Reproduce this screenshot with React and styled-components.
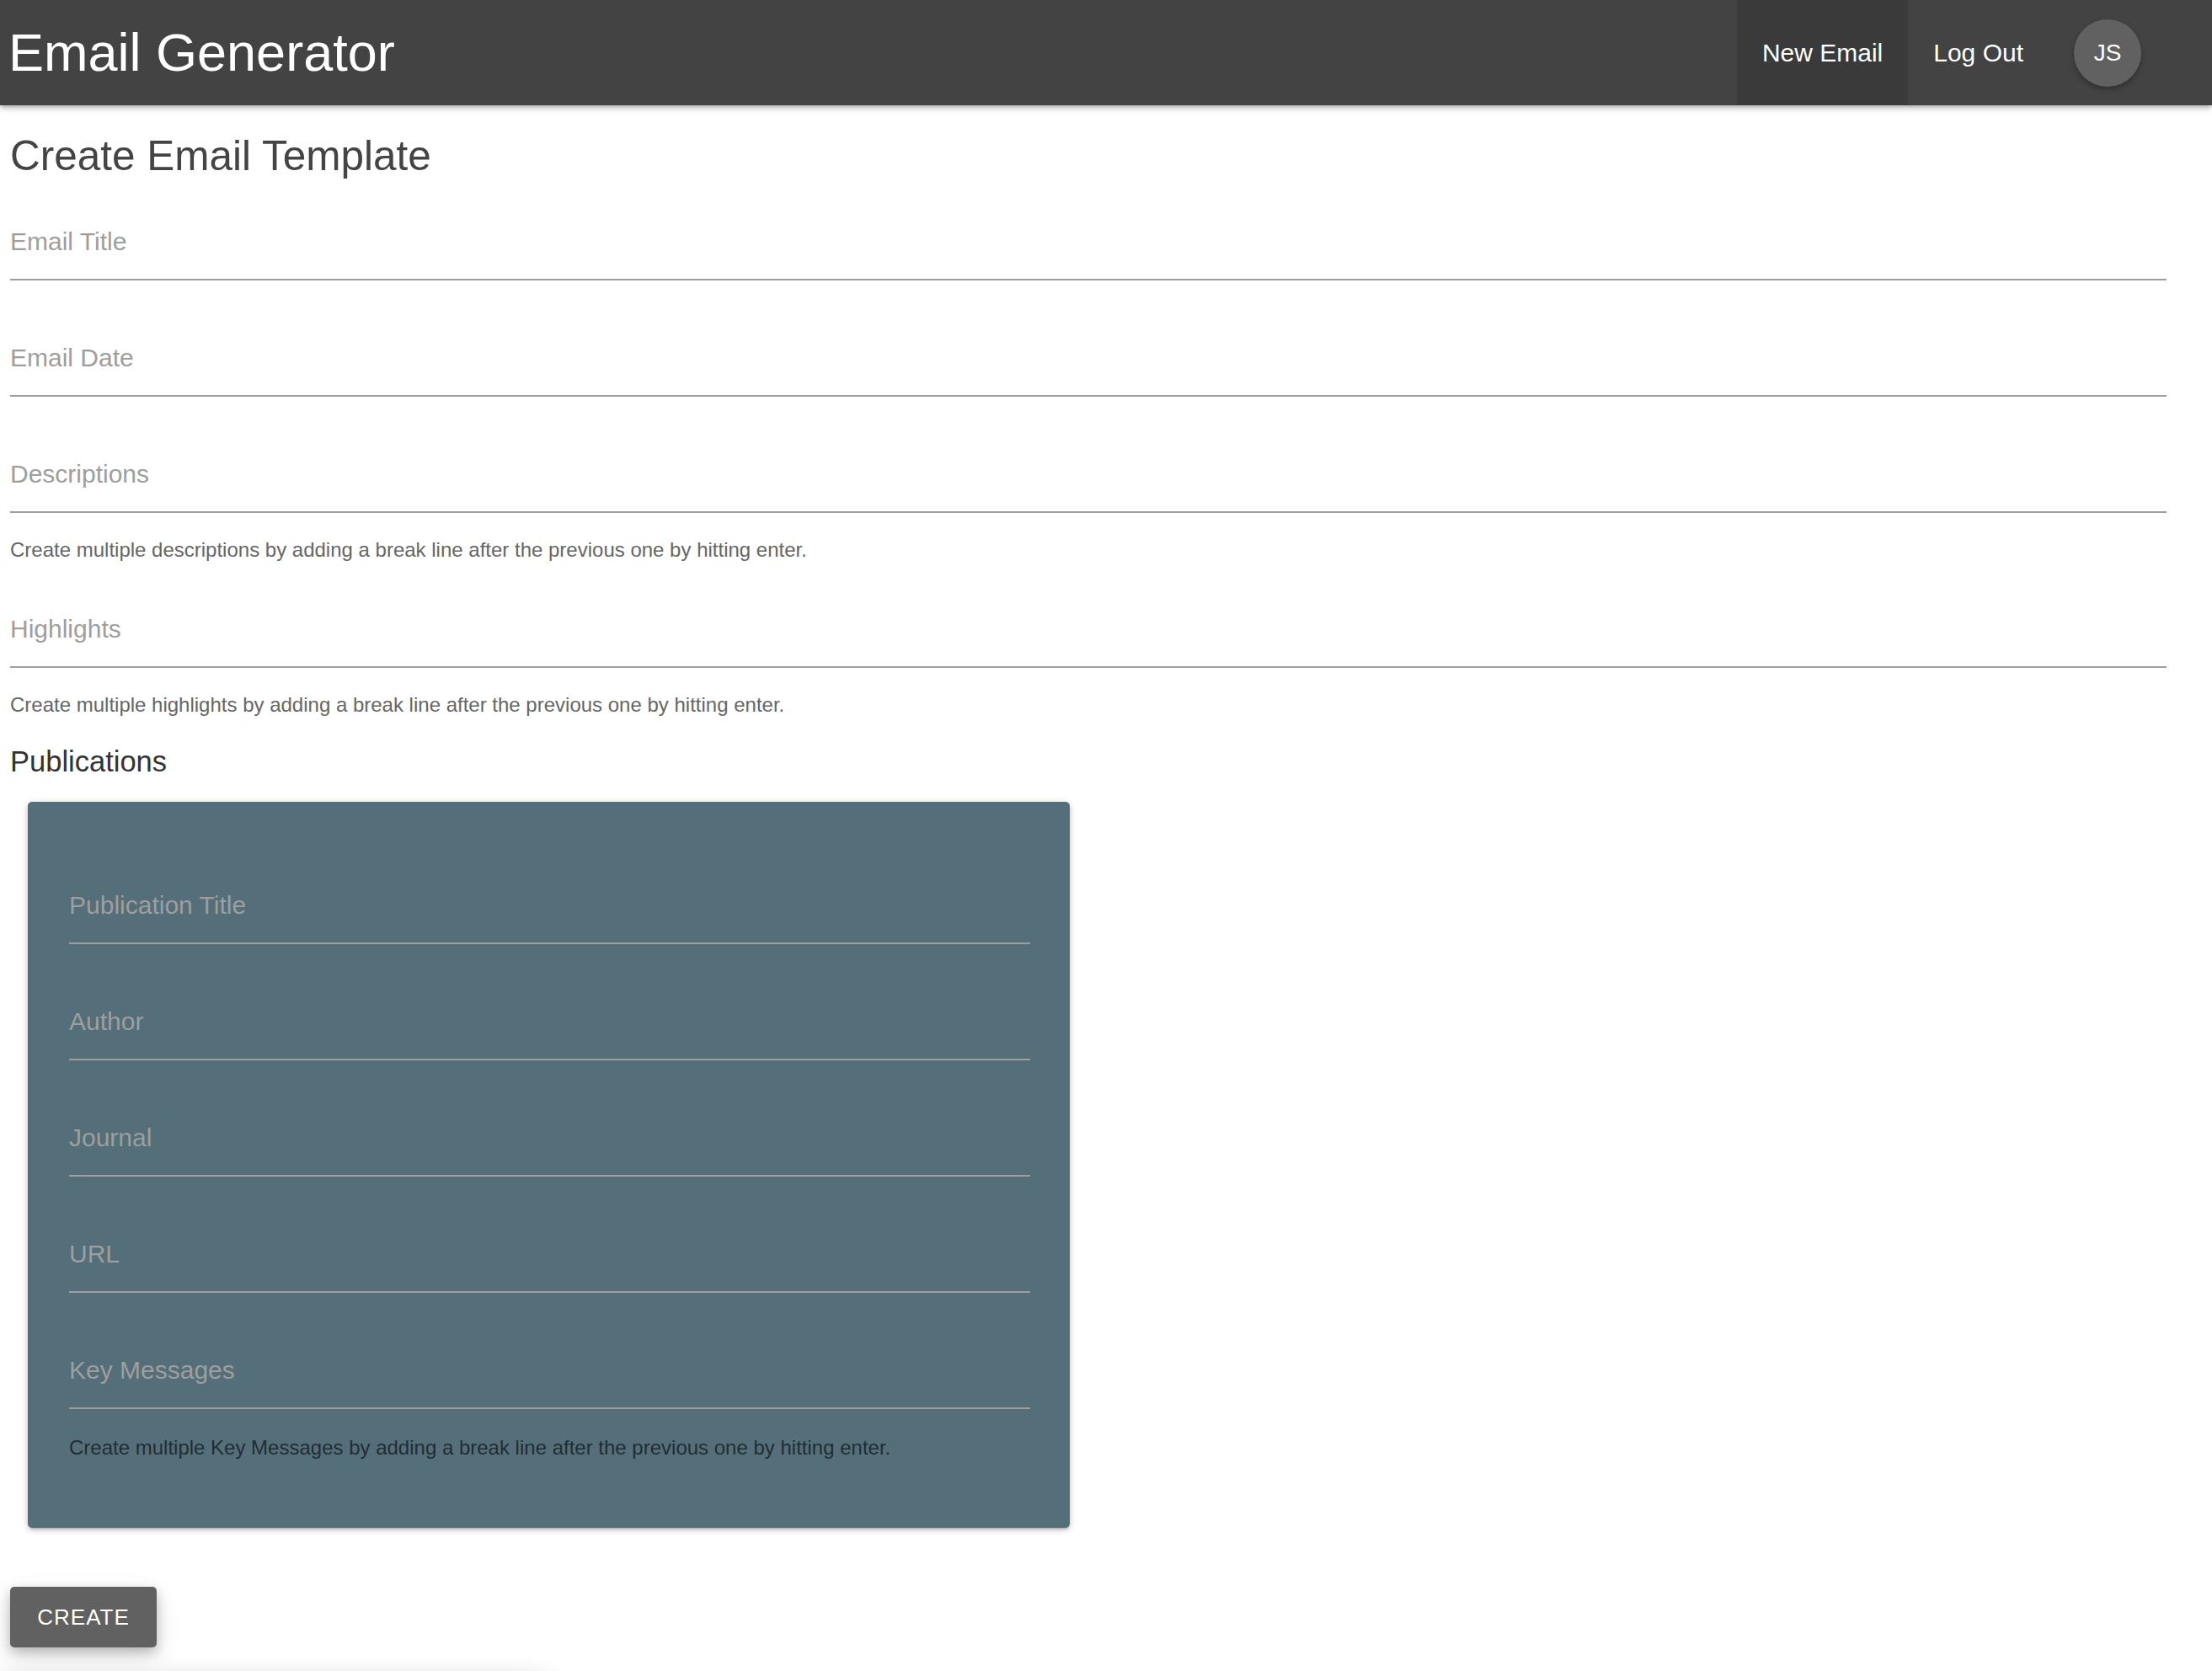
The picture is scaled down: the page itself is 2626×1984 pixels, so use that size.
import React from "react";
import styled, { createGlobalStyle } from "styled-components";

const GlobalStyle = createGlobalStyle`
  html, body {
    margin: 0;
    padding: 0;
    background: #ffffff;
    overflow: hidden;
  }
  body {
    font-family: "Liberation Sans", Arial, Helvetica, sans-serif;
    -webkit-font-smoothing: antialiased;
  }
  * { box-sizing: border-box; }
`;

const Page = styled.div`
  display: flex;
  flex-direction: column;
  height: 1984px;
  overflow: hidden;
`;

const AppBar = styled.header`
  display: flex;
  flex-shrink: 0;
  align-items: center;
  height: 125px;
  padding: 0 84px 0 10px;
  background: #434343;
  color: #ffffff;
  box-shadow: 0 2px 4px -1px rgba(0, 0, 0, 0.2), 0 4px 6px 0 rgba(0, 0, 0, 0.14),
    0 1px 12px 0 rgba(0, 0, 0, 0.12);
  position: relative;
  z-index: 2;
`;

const Brand = styled.h1`
  flex: 1;
  margin: 0;
  font-size: 63px;
  line-height: 1;
  font-weight: 400;
`;

const NavItem = styled.a`
  display: flex;
  align-items: center;
  align-self: stretch;
  padding: 0 30px;
  font-size: 30px;
  line-height: 1;
  color: #ffffff;
  text-decoration: none;
  background: ${(p) => (p.$active ? "#3a3a3a" : "transparent")};
`;

const Avatar = styled.div`
  display: flex;
  align-items: center;
  justify-content: center;
  width: 80px;
  height: 80px;
  margin-left: 30px;
  border-radius: 50%;
  background: #616161;
  color: #ffffff;
  font-size: 28px;
  box-shadow: 0 3px 6px rgba(0, 0, 0, 0.3);
`;

const Main = styled.main`
  display: flex;
  flex-direction: column;
  align-items: flex-start;
  padding: 28px 54px 0 12px;
`;

const Heading = styled.h2`
  margin: 0;
  font-size: 49.5px;
  line-height: 64px;
  font-weight: 400;
  color: #444444;
`;

const Field = styled.div`
  align-self: stretch;
  margin-top: ${(p) => p.$top ?? 74}px;
  padding-bottom: 26px;
  border-bottom: 2px solid #9e9e9e;
`;

const Label = styled.label`
  display: block;
  font-size: 30px;
  line-height: 36px;
  color: #9e9e9e;
`;

const Helper = styled.p`
  margin: ${(p) => p.$top ?? 28}px 0 0;
  font-size: 24px;
  line-height: 32px;
  color: ${(p) => (p.$dark ? "rgba(0, 0, 0, 0.62)" : "#666666")};
`;

const SectionTitle = styled.h3`
  margin: 31px 0 0;
  font-size: 34.5px;
  line-height: 40px;
  font-weight: 400;
  color: #333333;
`;

const Card = styled.section`
  display: flex;
  flex-direction: column;
  width: 1237px;
  margin: 28px 0 0 21px;
  padding: 31px 47px 79px 49px;
  background: #546e7a;
  border-radius: 5px;
  box-shadow: 0 3px 3px -2px rgba(0, 0, 0, 0.2), 0 3px 6px 0 rgba(0, 0, 0, 0.14),
    0 1px 10px 0 rgba(0, 0, 0, 0.12);
`;

const Button = styled.button`
  display: flex;
  flex-shrink: 0;
  align-items: center;
  justify-content: center;
  width: 174px;
  height: 72px;
  margin-top: 70px;
  border: none;
  border-radius: 5px;
  background: #616161;
  color: #ffffff;
  font-family: inherit;
  font-size: 26px;
  letter-spacing: 1px;
  text-transform: uppercase;
  box-shadow: 0 6px 14px rgba(0, 0, 0, 0.22), 0 10px 30px rgba(0, 0, 0, 0.12);
  cursor: pointer;
`;

const NextPanel = styled.div`
  flex-shrink: 0;
  width: 650px;
  height: 200px;
  margin-top: 36px;
  margin-left: -12px;
  background: #ffffff;
  box-shadow: 0 0 26px rgba(0, 0, 0, 0.16);
`;

const mainFields = [
  { label: "Email Title", top: 52 },
  { label: "Email Date" },
  { label: "Descriptions", helper: "Create multiple descriptions by adding a break line after the previous one by hitting enter." },
  { label: "Highlights", top: 60, helper: "Create multiple highlights by adding a break line after the previous one by hitting enter." },
];

const pubFields = ["Publication Title", "Author", "Journal", "URL", "Key Messages"];

export default function App() {
  return (
    <>
      <GlobalStyle />
      <Page>
        <AppBar>
          <Brand>Email Generator</Brand>
          <NavItem $active href="#">New Email</NavItem>
          <NavItem href="#">Log Out</NavItem>
          <Avatar>JS</Avatar>
        </AppBar>
        <Main>
          <Heading>Create Email Template</Heading>
          {mainFields.map((f) => (
            <React.Fragment key={f.label}>
              <Field $top={f.top}>
                <Label>{f.label}</Label>
              </Field>
              {f.helper && <Helper>{f.helper}</Helper>}
            </React.Fragment>
          ))}
          <SectionTitle>Publications</SectionTitle>
          <Card>
            {pubFields.map((l) => (
              <Field key={l}>
                <Label>{l}</Label>
              </Field>
            ))}
            <Helper $dark $top={30}>
              Create multiple Key Messages by adding a break line after the previous one by hitting enter.
            </Helper>
          </Card>
          <Button>Create</Button>
          <NextPanel />
        </Main>
      </Page>
    </>
  );
}
